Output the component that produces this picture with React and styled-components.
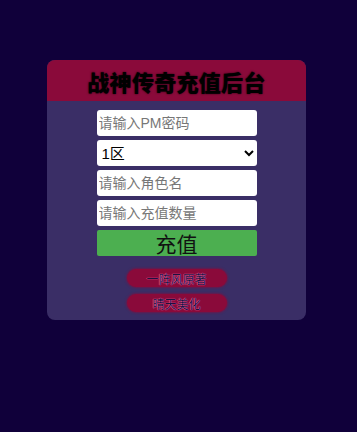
import React from "react";
import styled, { createGlobalStyle } from "styled-components";

const Global = createGlobalStyle`
  html, body { margin: 0; padding: 0; background: #10003a; }
  body { font-family: "Liberation Sans", "Noto Sans CJK SC", sans-serif; min-height: 432px; }
`;

const Page = styled.div`
  padding: 60px 0 0 47px;
`;

const Panel = styled.div`
  width: 259px;
  background: #3a2e66;
  border-radius: 8px;
  overflow: hidden;
  padding-bottom: 8px;
`;

const Header = styled.div`
  height: 41px;
  background: #8a0a3a;
  display: flex;
  align-items: center;
  justify-content: center;
`;

const Title = styled.h1`
  margin: 0;
  font-family: "Noto Sans CJK SC", sans-serif;
  font-size: 22px;
  font-weight: 900;
  color: #000;
  text-shadow: 0 0 2px rgba(0,0,0,0.8);
  letter-spacing: 0.3px;
`;

const Form = styled.div`
  display: flex;
  flex-direction: column;
  align-items: center;
  gap: 4px;
  padding-top: 9px;
`;

const Field = styled.input`
  box-sizing: border-box;
  width: 160px;
  height: 26px;
  border: none;
  border-radius: 3px;
  background: #fff;
  padding: 0 2px;
  font-family: "Liberation Sans", "Noto Sans CJK SC", sans-serif;
  font-size: 14px;
  color: #000;
  outline: none;
  &::placeholder { color: #777; }
`;

const Select = styled.select`
  box-sizing: border-box;
  width: 160px;
  height: 26px;
  border: none;
  border-radius: 3px;
  background: #fff;
  padding: 0 0 0 1px;
  font-family: "Liberation Sans", "Noto Sans CJK SC", sans-serif;
  font-size: 15px;
  color: #000;
`;

const Submit = styled.button`
  box-sizing: border-box;
  width: 160px;
  height: 26px;
  border: none;
  border-radius: 2px;
  background: #4caf50;
  color: #111;
  font-family: "Noto Sans CJK SC", sans-serif;
  font-size: 21px;
  line-height: 26px;
  padding: 0;
`;

const Credits = styled.div`
  display: flex;
  flex-direction: column;
  align-items: center;
  gap: 7px;
  margin-top: 13px;
`;

const Pill = styled.div`
  width: 100px;
  height: 18px;
  border-radius: 9px;
  background: #8a0a3a;
  box-shadow: 0 0 2px 1px rgba(138, 10, 58, 0.6);
  display: flex;
  align-items: center;
  justify-content: center;
  font-family: "Noto Sans CJK SC", sans-serif;
  font-size: 12px;
  color: #1e1040;
  text-shadow: 0 0 1px #ff7fc0, 0 0 1px #ff7fc0;
`;

export default function App() {
  return (
    <>
      <Global />
      <Page>
        <Panel>
          <Header>
            <Title>战神传奇充值后台</Title>
          </Header>
          <Form>
            <Field type="password" placeholder="请输入PM密码" />
            <Select defaultValue="1">
              <option value="1">1区</option>
              <option value="2">2区</option>
            </Select>
            <Field placeholder="请输入角色名" />
            <Field placeholder="请输入充值数量" />
            <Submit>充值</Submit>
          </Form>
          <Credits>
            <Pill>一阵风原著</Pill>
            <Pill>晴天美化</Pill>
          </Credits>
        </Panel>
      </Page>
    </>
  );
}
